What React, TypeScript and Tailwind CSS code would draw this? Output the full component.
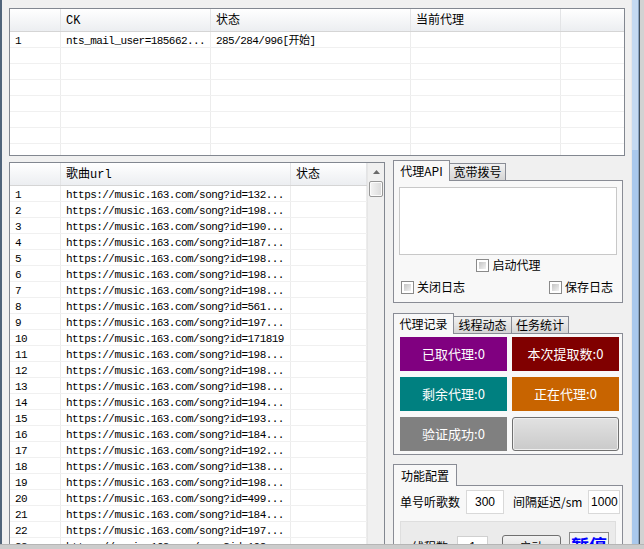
import React from 'react';

// font stacks
const monoFam = "font-['Liberation_Mono','Noto_Sans_CJK_SC',monospace]";
const cjkFam = "font-['Noto_Sans_CJK_SC','Noto_Sans',sans-serif]";

const songIds = [
  '132...', '198...', '190...', '187...', '198...', '198...', '198...', '561...',
  '197...', '171819', '198...', '198...', '198...', '194...', '193...', '184...',
  '192...', '138...', '198...', '499...', '184...', '197...', '198...',
];

const TopTable = () => {
  const cols = 'grid grid-cols-[51px_150px_200px_150px_1fr]';
  const headers = ['', 'CK', '状态', '当前代理', ''];
  const rows = [['1', 'nts_mail_user=185662...', '285/284/996[开始]', '', '']];
  for (let i = 0; i < 7; i++) rows.push(['', '', '', '', '']);

  return (
    <div className="w-[616px] h-[148px] shrink-0 border border-[#828790] bg-white overflow-hidden">
      <div className={`${cols} h-[23px] border-b border-[#d5d5d5] bg-linear-to-b from-white to-[#eceef1]`}>
        {headers.map((h, i) => (
          <div
            key={i}
            className={`${i < 4 ? 'border-r border-[#e3e4e6]' : ''} pl-[5px] pt-[2px] leading-[20px] text-[12px] ${monoFam}`}
          >
            {h}
          </div>
        ))}
      </div>
      {rows.map((r, ri) => (
        <div key={ri} className={`${cols} h-[16px] border-b border-[#f0f0f0]`}>
          {r.map((c, ci) => (
            <div
              key={ci}
              className={`${ci < 4 ? 'border-r border-[#ececec]' : ''} pl-[5px] leading-[18px] text-[11px] tracking-[-0.55px] whitespace-nowrap overflow-hidden ${monoFam}`}
            >
              {c}
            </div>
          ))}
        </div>
      ))}
    </div>
  );
};

const SongTable = () => {
  const cols = 'grid grid-cols-[51px_230px_76px]';
  return (
    <div className="w-[376px] h-[400px] border border-[#828790] bg-white flex overflow-hidden">
      <div className="flex-1 flex flex-col">
        <div className={`${cols} h-[23px] shrink-0 border-b border-[#d5d5d5] bg-linear-to-b from-white to-[#eceef1]`}>
          {['', '歌曲url', '状态'].map((h, i) => (
            <div key={i} className={`border-r border-[#e3e4e6] pl-[5px] pt-[2px] leading-[20px] text-[12px] ${monoFam}`}>
              {h}
            </div>
          ))}
        </div>
        {songIds.map((id, i) => (
          <div key={i} className={`${cols} h-[16px] shrink-0 border-b border-[#f0f0f0]`}>
            <div className={`border-r border-[#ececec] pl-[5px] leading-[18px] text-[11px] tracking-[-0.55px] overflow-hidden ${monoFam}`}>
              {i + 1}
            </div>
            <div className={`border-r border-[#ececec] pl-[5px] leading-[18px] text-[11px] tracking-[-0.55px] whitespace-nowrap overflow-hidden ${monoFam}`}>
              https://music.163.com/song?id={id}
            </div>
            <div className="border-r border-[#ececec]" />
          </div>
        ))}
      </div>
      {/* scrollbar */}
      <div className="w-[17px] flex flex-col bg-[#f0f0f0] border-l border-[#e6e6e6]">
        <div className="h-[18px] flex items-center justify-center">
          <svg width="7" height="4" viewBox="0 0 7 4">
            <path d="M0 4 L3.5 0 L7 4 Z" fill="#6a6a6a" />
          </svg>
        </div>
        <div className="h-[16px] mx-[1px] rounded-[2px] border border-[#979797] bg-linear-to-r from-[#f4f4f4] to-[#dadada] shadow-[inset_0_0_0_1px_#fbfbfb]" />
      </div>
    </div>
  );
};

type TabDef = { label: string; w: string };

const TabStrip = ({ tabs, tall }: { tabs: TabDef[]; tall?: boolean }) => (
  <div className={`flex items-end shrink-0 ${tall ? 'h-[21px]' : 'h-[20px]'}`}>
    {tabs.map((t, i) =>
      i === 0 ? (
        <div
          key={i}
          className={`relative z-10 -mb-px ${tall ? 'h-[22px] leading-[21px]' : 'h-[21px] leading-[19px]'} ${t.w} border border-b-0 border-[#898c95] bg-[#f8f8f8] text-center text-[12px] ${cjkFam}`}
        >
          {t.label}
        </div>
      ) : (
        <div
          key={i}
          className={`-ml-px h-[17px] ${t.w} border border-b-0 border-[#898c95] bg-linear-to-b from-[#f2f2f2] to-[#d5d5d5] text-center leading-[16px] text-[12px] ${cjkFam}`}
        >
          {t.label}
        </div>
      ),
    )}
  </div>
);

const Check = ({ label }: { label: string }) => (
  <div className="flex items-center gap-[3px]">
    <span className="w-[13px] h-[13px] border border-[#8a8a8a] bg-white p-[2px] flex">
      <span className="flex-1 bg-linear-to-br from-[#c4c4c4] to-[#f2f2f2]" />
    </span>
    <span className={`text-[12px] leading-none ${cjkFam}`}>{label}</span>
  </div>
);

const StatBox = ({ label, bg }: { label: string; bg: string }) => (
  <div className={`h-[34px] ${bg} flex items-center justify-center text-white text-[13px] ${cjkFam}`}>
    {label}
  </div>
);

const RightPanel = () => (
  <div className="ml-[8px] w-[230px] flex flex-col">
    {/* proxy api */}
    <TabStrip tabs={[{ label: '代理API', w: 'w-[57px]' }, { label: '宽带拨号', w: 'w-[57px]' }]} />
    <div className="h-[123px] shrink-0 border border-[#898c95] bg-[#f8f8f8] px-[5px] pt-[6px]">
      <div className="h-[68px] bg-white border border-[#c8c8c8]" />
      <div className="h-[20px] flex items-center justify-center pl-[1px]">
        <Check label="启动代理" />
      </div>
      <div className="h-[22px] mt-[1px] flex items-center justify-between pl-[2px] pr-[4px]">
        <Check label="关闭日志" />
        <Check label="保存日志" />
      </div>
    </div>

    {/* proxy records */}
    <div className="mt-[10px] shrink-0">
      <TabStrip
        tabs={[
          { label: '代理记录', w: 'w-[61px]' },
          { label: '线程动态', w: 'w-[59px]' },
          { label: '任务统计', w: 'w-[58px]' },
        ]}
      />
      <div className="h-[122px] border border-[#898c95] bg-[#f8f8f8] pl-[6px] pt-[3px]">
        <div className="grid grid-cols-[107px_107px] gap-x-[5px] gap-y-[6px]">
          <StatBox label="已取代理:0" bg="bg-[#800080]" />
          <StatBox label="本次提取数:0" bg="bg-[#800000]" />
          <StatBox label="剩余代理:0" bg="bg-[#008080]" />
          <StatBox label="正在代理:0" bg="bg-[#c86400]" />
          <StatBox label="验证成功:0" bg="bg-[#808080]" />
          <div className="h-[34px] rounded-[3px] border border-[#707070] bg-linear-to-b from-[#e2e2e2] to-[#cacaca] shadow-[inset_0_0_0_1px_#efefef]" />
        </div>
      </div>
    </div>

    {/* settings */}
    <div className="mt-[9px] shrink-0">
      <TabStrip tall tabs={[{ label: '功能配置', w: 'w-[64px]' }]} />
      <div className="h-[90px] border border-[#898c95] bg-[#f8f8f8] pt-[4px]">
        <div className={`flex items-center h-[24px] pl-[6px] text-[12px] ${cjkFam}`}>
          <span>单号听歌数</span>
          <div className="ml-[6px] w-[38px] h-[24px] bg-white border border-[#d9d9d9] flex items-center justify-center font-['Liberation_Sans',sans-serif] text-[12px]">
            300
          </div>
          <span className="ml-[9px]">间隔延迟/sm</span>
          <div className="ml-[6px] w-[32px] h-[24px] bg-white border border-[#d9d9d9] flex items-center justify-center font-['Liberation_Sans',sans-serif] text-[12px]">
            1000
          </div>
        </div>
        <div className="mt-[7px] mx-[6px] h-[40px] bg-[#ebebeb] border border-[#dedede] flex items-start pl-[11px] pt-[10px]">
          <span className={`mt-[6px] text-[12px] ${cjkFam}`}>线程数</span>
          <div className="ml-[9px] mt-[4px] w-[31px] h-[22px] bg-white border border-[#d0d0d0] flex items-center justify-center text-[12px] font-['Liberation_Sans',sans-serif]">
            1
          </div>
          <div className={`ml-[14px] mt-[3px] w-[59px] h-[24px] rounded-[3px] border border-[#707070] bg-linear-to-b from-[#f2f2f2] to-[#d6d6d6] flex items-center justify-center text-[12px] ${cjkFam}`}>
            启动
          </div>
          <div className={`ml-[8px] w-[40px] h-[26px] border border-[#8a8a8a] bg-[#f4f4f4] flex items-center justify-center text-[18px] font-bold text-[#0000ff] leading-none ${cjkFam}`}>
            暂停
          </div>
        </div>
      </div>
    </div>
  </div>
);

const RightFrame = () => (
  <div className="flex w-[13px] shrink-0">
    <div className="w-[1px] bg-[#e8e8e8]" />
    <div className="w-[6px] flex flex-col">
      <div className="h-[150px] bg-[#c5daf1]" />
      <div className="flex-1 bg-[#a9c8ec]" />
    </div>
    <div className="w-[1px] bg-[#8ba5c2]" />
    <div className="w-[1px] bg-[#44525f]" />
    <div className="w-[4px] bg-[#d2d2d2]" />
  </div>
);

export default function App() {
  return (
    <div className="w-[644px] h-[549px] overflow-hidden bg-[#f0f0f0] flex flex-col text-black">
      <div className="flex h-[544px] shrink-0">
        <div className="w-[2px] shrink-0 bg-[#50647a]" />
        <div className="w-[629px] flex flex-col pl-[7px] pt-[8px] overflow-hidden">
          <TopTable />
          <div className="flex mt-[4px] flex-1 min-h-0">
            <div className="mt-[2px] shrink-0">
              <SongTable />
            </div>
            <RightPanel />
          </div>
        </div>
        <RightFrame />
      </div>
      <div className="h-[5px] shrink-0 bg-[#cccccc] border-t border-[#b5b5b5]" />
    </div>
  );
}
